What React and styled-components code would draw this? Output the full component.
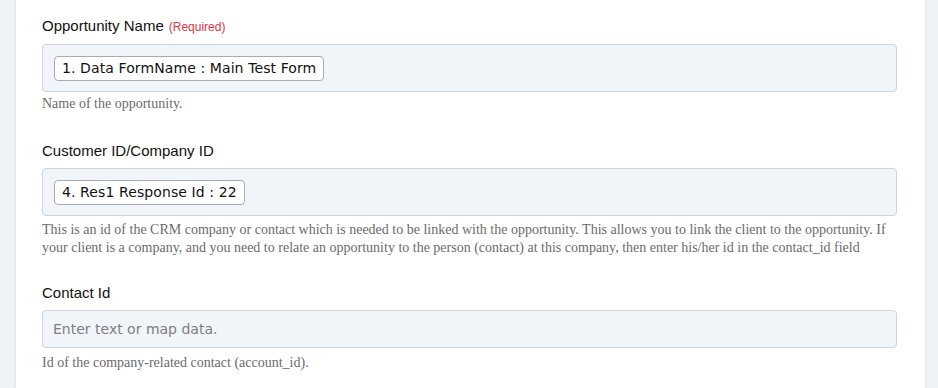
import React from 'react'
import styled, { createGlobalStyle } from 'styled-components'

const Global = createGlobalStyle`
  html, body { margin: 0; padding: 0; }
  body {
    background: #eff2f6;
    font-family: "Liberation Sans", Arial, sans-serif;
    overflow: hidden;
  }
`

const Page = styled.div`
  display: flex;
  height: 388px;
  padding-left: 16px;
  padding-right: 13px;
`

const Card = styled.div`
  flex: 1;
  background: #fff;
  box-shadow: 0 0 3px rgba(0, 0, 0, 0.12);
  padding: 17px 28px 0 26px;
  display: flex;
  flex-direction: column;
`

const Field = styled.div`
  display: flex;
  flex-direction: column;
  margin-bottom: ${p => p.$after || 0}px;
`

const Label = styled.div`
  font-size: 15px;
  line-height: 18px;
  color: #111;
  margin-bottom: 8px;
`

const Required = styled.span`
  font-size: 12px;
  color: #e0343f;
  margin-left: 5px;
`

const MapBox = styled.div`
  display: flex;
  align-items: center;
  gap: 6px;
  min-height: 48px;
  box-sizing: border-box;
  padding: 0 11px;
  background: #f1f4f8;
  border: 1px solid #cfd5de;
  border-radius: 4px;
`

const Chip = styled.span`
  display: inline-flex;
  align-items: center;
  height: 25px;
  box-sizing: border-box;
  padding: 0 7px;
  background: #fff;
  border: 1px solid #a7acb3;
  border-radius: 4px;
  font-family: "DejaVu Sans", Verdana, sans-serif;
  font-size: 14px;
  letter-spacing: 0.1px;
  color: #111;
`

const TextInput = styled.input`
  height: 38px;
  box-sizing: border-box;
  padding: 0 10px;
  background: #f1f4f8;
  border: 1px solid #cfd5de;
  border-radius: 4px;
  font-family: "DejaVu Sans", Verdana, sans-serif;
  font-size: 14px;
  color: #111;
  outline: none;
  &::placeholder { color: #7d7f82; }
`

const Help = styled.div`
  font-family: "Liberation Serif", "Times New Roman", serif;
  font-size: 14px;
  line-height: 18px;
  color: #6b6b6b;
  margin-top: ${p => p.$gap || 3}px;
`

const fields = [
  {
    label: 'Opportunity Name',
    required: true,
    chips: ['1. Data FormName : Main Test Form'],
    help: 'Name of the opportunity.',
    gap: 3,
    after: 29
  },
  {
    label: 'Customer ID/Company ID',
    chips: ['4. Res1 Response Id : 22'],
    help: 'This is an id of the CRM company or contact which is needed to be linked with the opportunity. This allows you to link the client to the opportunity. If your client is a company, and you need to relate an opportunity to the person (contact) at this company, then enter his/her id in the contact_id field',
    gap: 5,
    after: 27
  },
  {
    label: 'Contact Id',
    placeholder: 'Enter text or map data.',
    help: 'Id of the company-related contact (account_id).',
    gap: 6
  }
]

const App = () => {
  return (
    <>
      <Global />
      <Page>
        <Card>
          {fields.map((f, i) => (
            <Field key={i} $after={f.after}>
              <Label>
                {f.label}
                {f.required && <Required>(Required)</Required>}
              </Label>
              {f.chips ? (
                <MapBox>
                  {f.chips.map((c, j) => <Chip key={j}>{c}</Chip>)}
                </MapBox>
              ) : (
                <TextInput placeholder={f.placeholder} />
              )}
              <Help $gap={f.gap}>{f.help}</Help>
            </Field>
          ))}
        </Card>
      </Page>
    </>
  )
}

export default App
